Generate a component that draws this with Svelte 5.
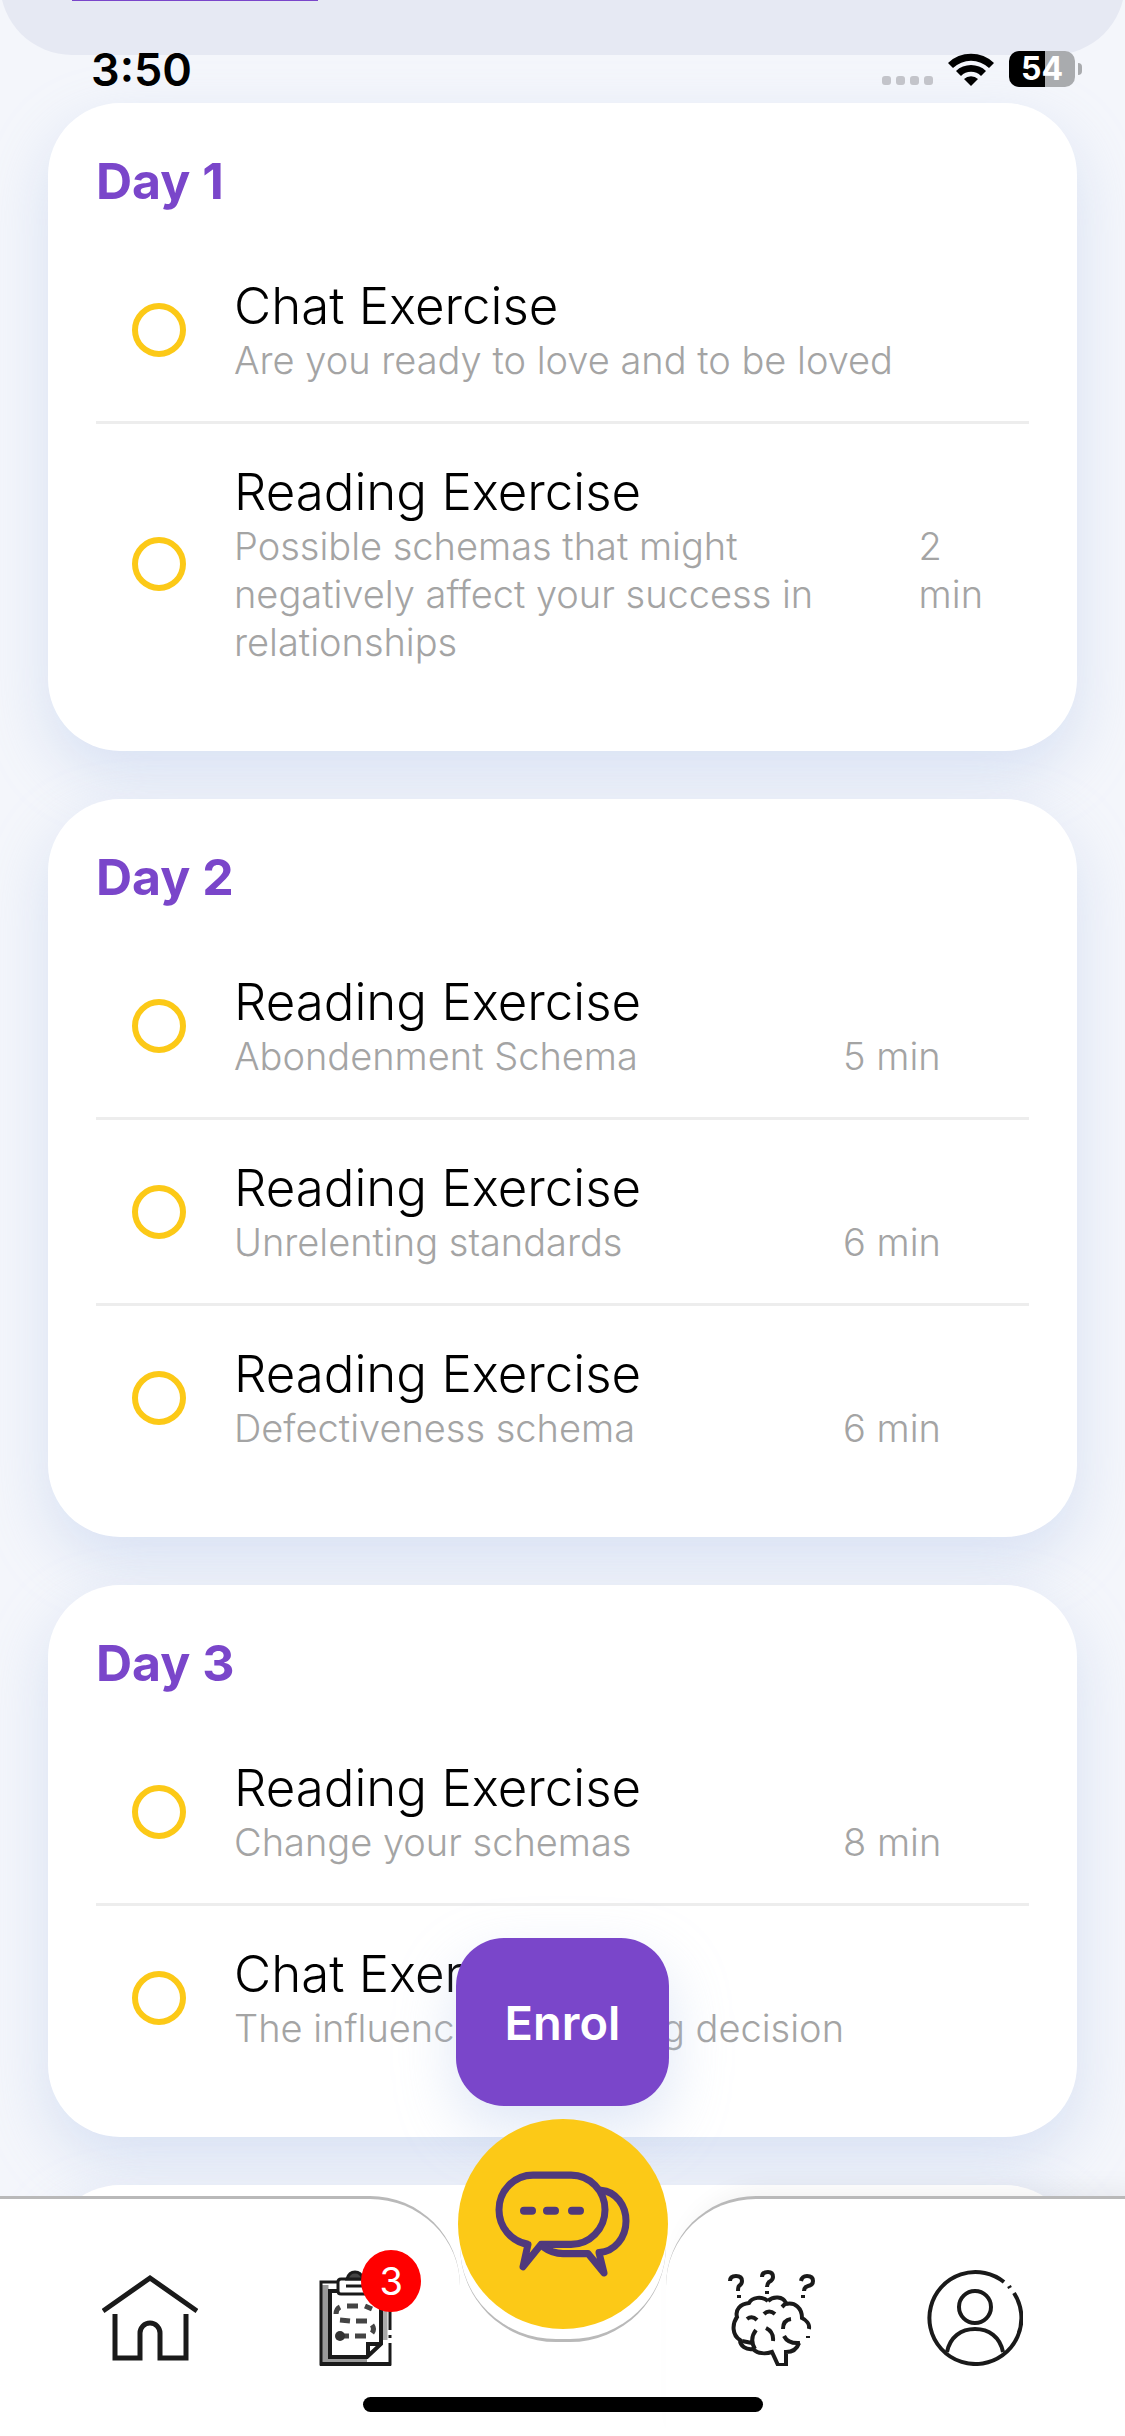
<script>
  let days = $state([
    {
      title: 'Day 1',
      exercises: [
        { type: 'Chat Exercise', text: 'Are you ready to love and to be loved', done: false },
        {
          type: 'Reading Exercise',
          text: 'Possible schemas that might negatively affect your success in relationships',
          time: '2 min',
          done: false,
        },
      ],
    },
    {
      title: 'Day 2',
      exercises: [
        { type: 'Reading Exercise', text: 'Abondenment Schema', time: '5 min', done: false },
        { type: 'Reading Exercise', text: 'Unrelenting standards', time: '6 min', done: false },
        { type: 'Reading Exercise', text: 'Defectiveness schema', time: '6 min', done: false },
      ],
    },
    {
      title: 'Day 3',
      exercises: [
        { type: 'Reading Exercise', text: 'Change your schemas', time: '8 min', done: false },
        { type: 'Chat Exercise', text: 'The influence over dating decision', done: false },
      ],
    },
    { title: 'Day 4', exercises: [] },
  ]);

  let notifications = 3;
</script>

<div class="screen">
  <header class="intro"><div class="tab-line"></div></header>

  <div class="status">
    <span class="clock">3:50</span>
    <div class="signals">
      <div class="dots"><i></i><i></i><i></i><i></i></div>
      <svg width="46" height="34" viewBox="0 0 46 34" aria-hidden="true">
        <path d="M0 11 A33 33 0 0 1 46 11 L41 16 A26 26 0 0 0 5 16 Z" />
        <path d="M8 19 A22 22 0 0 1 38 19 L33 24 A14 14 0 0 0 13 24 Z" />
        <path d="M16 27 A10 10 0 0 1 30 27 L23 34 Z" />
      </svg>
      <div class="battery"><span>54</span></div>
    </div>
  </div>

  <main>
    {#each days as day}
      <section class="card">
        <h2>{day.title}</h2>
        {#each day.exercises as exercise}
          <label class="row">
            <input type="checkbox" bind:checked={exercise.done} />
            <span class="body">
              <span class="type">{exercise.type}</span>
              <span class="details">
                <span class="text">{exercise.text}</span>
                {#if exercise.time}
                  <span class="time">{exercise.time}</span>
                {/if}
              </span>
            </span>
          </label>
        {/each}
      </section>
    {/each}
  </main>

  <div class="dock">
    <button class="enrol" type="button">Enrol</button>

    <nav>
      <div class="shape">
        <div class="left"></div>
        <div class="bowl"></div>
        <div class="right"></div>
      </div>

      <div class="tabs">
        <a href="#home" aria-label="Home">
          <svg class="icon" viewBox="0 0 96 96">
            <g stroke-width="5">
              <path d="M1 41 L48 8 L95 41" />
              <path d="M13 44 V88 H38 V63 a10 10 0 0 1 20 0 V88 H84 V44" />
            </g>
          </svg>
        </a>

        <a href="#tasks" aria-label="Tasks">
          <svg class="icon" viewBox="0 0 96 96">
            <path d="M18 15 V91 H60" stroke="#999" stroke-width="7" />
            <path d="M78 15 V70" stroke="#aaa" stroke-width="5" />
            <path d="M31 12 H14 V94 H83 V73 M83 60 V12 H65" stroke-width="3" />
            <path d="M13 94 H84" stroke-width="4" />
            <path d="M83 65 V68" stroke-width="3" />
            <path d="M31 21 H23 V87 H60 L74 74 V21 H65" stroke-width="4" />
            <path d="M61 86 V74 H73" stroke-width="4" />
            <path d="M34 9 H62 Q65 9 65 12 V21 Q65 24 62 24 H34 Q31 24 31 21 V12 Q31 9 34 9 Z" fill="#fff" />
            <path d="M40 9 Q42 2 48 2 Q54 2 56 9 Z" fill="#444" />
            <path d="M39 16 H57" />
            <g stroke="#444" stroke-width="5">
              <path d="M29 44 Q29 39 33 37 M40 36 H51 M58 36 L65 39" />
              <path d="M33 50 L43 51 M49 51 H60 M65 55 Q68 59 65 63" />
              <path d="M37 66 H42 M48 66 H59" />
            </g>
            <circle cx="33" cy="66" r="5" fill="#333" stroke="none" />
          </svg>
          <span class="badge">{notifications}</span>
        </a>

        <a class="chat" href="#chat" aria-label="Chat">
          <svg width="135" height="106" viewBox="0 0 135 104" preserveAspectRatio="none">
            <g fill="none" stroke="#50397c" stroke-width="7" stroke-linecap="round" stroke-linejoin="round">
              <path d="M38 4 H76 A34 34 0 0 1 76 72 H46 L28 94 L33 72 C16 69 4 55 4 38 A34 34 0 0 1 38 4 Z" />
              <path d="M106 19 C121 20 131 34 131 49 C131 65 120 79 104 80 L109 100 L93 81 H68 Q57 81 49 75" />
              <path d="M29 39 H37 M52 39 H60 M77 39 H85" stroke-width="8" />
            </g>
          </svg>
        </a>

        <a href="#mind" aria-label="Mind">
          <svg class="icon" viewBox="0 0 96 96">
            <g stroke-width="4">
              <path d="M8 11 Q8 6 14 6 Q20 6 20 11 Q20 14 17 16 Q16 17 16 21 M17 25 V28" />
              <path d="M40 7 Q40 2 46 2 Q51 2 51 7 Q51 10 47 12 Q45 14 45 17 M45 21 V24" />
              <path d="M79 11 Q80 6 85 6 Q91 6 91 11 Q91 15 86 16 Q82 17 82 21 M81 25 V28" />
              <path
                d="M46 31 C40 26 30 27 27 33 C18 34 13 40 15 47 C10 54 10 65 18 70 C18 76 24 80 31 79 C36 84 44 84 50 82 L56 95 H64 V82 C70 82 75 79 77 73"
              />
              <path d="M46 31 C51 26 61 26 64 33 L60 37 M64 34 C73 32 80 38 80 48 C84 50 88 54 87 59" />
              <path d="M86 66 V68 M78 73 Q66 74 62 66 M69 49 Q61 50 61 59" />
              <path d="M25 49 Q30 45 35 50 M42 44 Q47 39 53 44" />
              <path d="M34 60 Q27 69 33 79 M20 71 L30 73 M44 58 Q52 62 51 71" />
            </g>
          </svg>
        </a>

        <a href="#profile" aria-label="Profile">
          <svg class="icon" viewBox="0 0 96 96">
            <g stroke-width="4">
              <path d="M77 12 A46 46 0 1 0 87 23" />
              <path d="M82 16 L83 18" />
              <circle cx="48" cy="37" r="16" />
              <path d="M20 82 C23 67 34 59 48 59 C62 59 73 67 76 82" />
            </g>
          </svg>
        </a>
      </div>

      <div class="home-indicator"></div>
    </nav>
  </div>
</div>

<style>
  :global(body) {
    margin: 0;
  }

  .screen {
    position: relative;
    height: 100vh;
    overflow: hidden;
    background: #f4f6fb;
    color: #000;
    font-family: Inter, 'Open Sans', sans-serif;
  }

  .intro {
    box-sizing: border-box;
    height: 155px;
    margin-top: -100px;
    padding: 99px 72px 0;
    border-radius: 0 0 72px 72px;
    background: #e6e9f3;
  }

  .tab-line {
    width: 246px;
    height: 2px;
    background: #7a46ca;
  }

  .status {
    position: absolute;
    z-index: 2;
    top: 40px;
    left: 0;
    right: 0;
    display: flex;
    align-items: center;
    justify-content: space-between;
    padding: 0 43px 0 91px;
    height: 58px;
  }

  .clock {
    font-size: 45px;
    font-weight: 600;
  }

  .signals {
    display: flex;
    align-items: center;
    gap: 15px;
  }

  .dots {
    display: flex;
    align-self: flex-end;
    gap: 5px;
    margin-bottom: 2px;
  }

  .dots i {
    width: 9px;
    height: 9px;
    border-radius: 3px;
    background: #c3c4ca;
  }

  .battery {
    position: relative;
    width: 66px;
    height: 36px;
    margin-right: 7px;
    border-radius: 10px;
    background: linear-gradient(90deg, #000 36px, #a9abae 36px);
    color: #fff;
    font-size: 32px;
    font-weight: 700;
    line-height: 36px;
    text-align: center;
  }

  .battery::after {
    content: '';
    position: absolute;
    top: 12px;
    right: -7px;
    width: 4px;
    height: 12px;
    border-radius: 0 4px 4px 0;
    background: #a9abae;
  }

  main {
    display: flex;
    flex-direction: column;
    gap: 48px;
    padding: 48px 48px 0;
  }

  .card {
    padding: 48px;
    border-radius: 72px;
    background: #fff;
    box-shadow: 0 24px 60px rgba(174, 194, 232, 0.4);
  }

  h2 {
    margin: 0 0 27px;
    color: #7a46ca;
    font-size: 50px;
    font-weight: 700;
    line-height: 60px;
  }

  .row {
    display: flex;
    align-items: center;
    gap: 48px;
    padding: 38px 0 37px 36px;
    border-bottom: 3px solid #ededed;
  }

  .row:last-child {
    border-bottom: none;
  }

  input {
    appearance: none;
    flex: none;
    box-sizing: border-box;
    width: 54px;
    height: 54px;
    margin: 0;
    border: 6px solid #fcc917;
    border-radius: 50%;
  }

  input:checked {
    background: #fcc917;
  }

  .body {
    flex: 1;
    min-width: 0;
  }

  .type {
    display: block;
    font-size: 51px;
    font-weight: 300;
    line-height: 60px;
  }

  .details {
    display: flex;
    color: #a4a4a4;
    font-size: 38px;
    font-weight: 300;
    line-height: 48px;
  }

  .text {
    box-sizing: border-box;
    min-width: 609px;
    padding-right: 60px;
  }

  .time {
    padding-right: 46px;
  }

  /* floating button and tab bar */
  .dock {
    position: absolute;
    z-index: 1;
    left: 0;
    right: 0;
    bottom: 0;
    display: flex;
    flex-direction: column;
    align-items: center;
    gap: 90px;
  }

  .enrol {
    width: 213px;
    height: 168px;
    padding: 0;
    border: none;
    border-radius: 48px;
    background: #7a46ca;
    box-shadow: 0 24px 60px rgba(174, 194, 232, 0.4);
    color: #fff;
    font-family: inherit;
    font-size: 47px;
    font-weight: 600;
  }

  nav {
    position: relative;
    width: 100%;
    background: #fff;
  }

  .shape {
    position: absolute;
    inset: 0;
    display: flex;
  }

  .left,
  .right {
    flex: 1;
    border-top: 3px solid #b9b9b9;
    background: #fff;
  }

  .left {
    border-top-right-radius: 90px;
  }

  .right {
    border-top-left-radius: 90px;
    box-shadow: 12px -8px 24px rgba(0, 0, 0, 0.05);
  }

  .bowl {
    width: 206px;
    height: 143px;
    border-bottom: 3px solid #b9b9b9;
    border-radius: 0 0 96px 96px;
  }

  .tabs {
    position: relative;
    display: grid;
    grid-template-columns: repeat(5, 1fr);
    justify-items: center;
    padding: 74px 48px 31px;
  }

  .tabs a {
    position: relative;
    height: 96px;
  }

  .icon {
    display: block;
    width: 96px;
    height: 96px;
    fill: none;
    stroke: #1a1a1a;
    stroke-width: 3;
  }

  .badge {
    position: absolute;
    top: -20px;
    right: -18px;
    width: 60px;
    height: 62px;
    border-radius: 50%;
    background: #f00;
    color: #fff;
    font-size: 38px;
    line-height: 62px;
    text-align: center;
  }

  .tabs .chat {
    display: flex;
    align-items: center;
    justify-content: center;
    width: 210px;
    height: 210px;
    margin: -151px 0 0;
    border-radius: 50%;
    background: #fcc917;
  }

  .home-indicator {
    position: relative;
    width: 400px;
    height: 15px;
    margin: 0 auto 24px;
    border-radius: 8px;
    background: #000;
  }
</style>
